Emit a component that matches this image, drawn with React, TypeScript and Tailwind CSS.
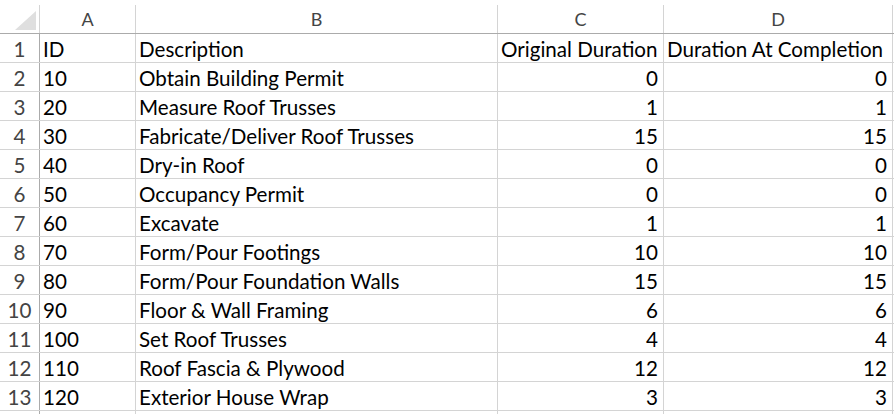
const columns = [
    { key: "A", width: "w-[96px]" },
    { key: "B", width: "w-[362px]" },
    { key: "C", width: "w-[166px]" },
    { key: "D", width: "w-[229px]" },
];

const rows: [string, string, string, string][] = [
    ["ID", "Description", "Original Duration", "Duration At Completion"],
    ["10", "Obtain Building Permit", "0", "0"],
    ["20", "Measure Roof Trusses", "1", "1"],
    ["30", "Fabricate/Deliver Roof Trusses", "15", "15"],
    ["40", "Dry-in Roof", "0", "0"],
    ["50", "Occupancy Permit", "0", "0"],
    ["60", "Excavate", "1", "1"],
    ["70", "Form/Pour Footings", "10", "10"],
    ["80", "Form/Pour Foundation Walls", "15", "15"],
    ["90", "Floor & Wall Framing", "6", "6"],
    ["100", "Set Roof Trusses", "4", "4"],
    ["110", "Roof Fascia & Plywood", "12", "12"],
    ["120", "Exterior House Wrap", "3", "3"],
];

export default function App() {
    return (
        <div className="h-[414px] w-[894px] overflow-hidden bg-white text-black" style={{ fontFamily: "Lato, 'Liberation Sans', sans-serif" }}>
            {/* column letters */}
            <div className="flex h-[34px] border-b border-[#ababab]">
                <div className="relative w-[40px] shrink-0">
                    <svg className="absolute left-0 top-0" width="40" height="33" viewBox="0 0 40 33">
                        <polygon points="36,11 36,30 15,30" fill="#dfdfdf" />
                    </svg>
                    <div className="absolute right-0 top-[5px] h-[28px] w-px bg-[#d4d4d4]" />
                </div>
                {columns.map((c) => (
                    <div key={c.key} className={`${c.width} shrink-0 pt-[5px]`}>
                        <div className="flex h-[28px] items-center justify-center border-r border-[#d4d4d4] text-[18px] text-[#444]">{c.key}</div>
                    </div>
                ))}
                <div className="flex-1" />
            </div>

            {rows.map((r, i) => (
                <div key={i} className="flex h-[29px] border-b border-[#d4d4d4] text-[20.6px] leading-none">
                    <div className="flex w-[40px] shrink-0 items-center justify-center border-r border-[#ababab] pt-[2px] text-[#444]">{i + 1}</div>
                    <div className="flex w-[96px] shrink-0 items-center border-r border-[#d4d4d4] pl-[3px] pt-[2px]">{r[0]}</div>
                    <div className="flex w-[362px] shrink-0 items-center border-r border-[#d4d4d4] pl-[3px] pt-[2px]">{r[1]}</div>
                    <div className={`flex w-[166px] shrink-0 items-center border-r border-[#d4d4d4] pt-[2px] ${i === 0 ? "pl-[3px]" : "justify-end pr-[5px]"}`}>{r[2]}</div>
                    <div className={`flex w-[229px] shrink-0 items-center border-r border-[#d4d4d4] pt-[2px] ${i === 0 ? "pl-[3px]" : "justify-end pr-[5px]"}`}>{r[3]}</div>
                    <div className="flex-1" />
                </div>
            ))}

            {/* next, empty row peeking below */}
            <div className="flex h-[29px]">
                <div className="w-[40px] shrink-0 border-r border-[#ababab]" />
                {columns.map((c) => (
                    <div key={c.key} className={`${c.width} shrink-0 border-r border-[#d4d4d4]`} />
                ))}
                <div className="flex-1" />
            </div>
        </div>
    );
}
